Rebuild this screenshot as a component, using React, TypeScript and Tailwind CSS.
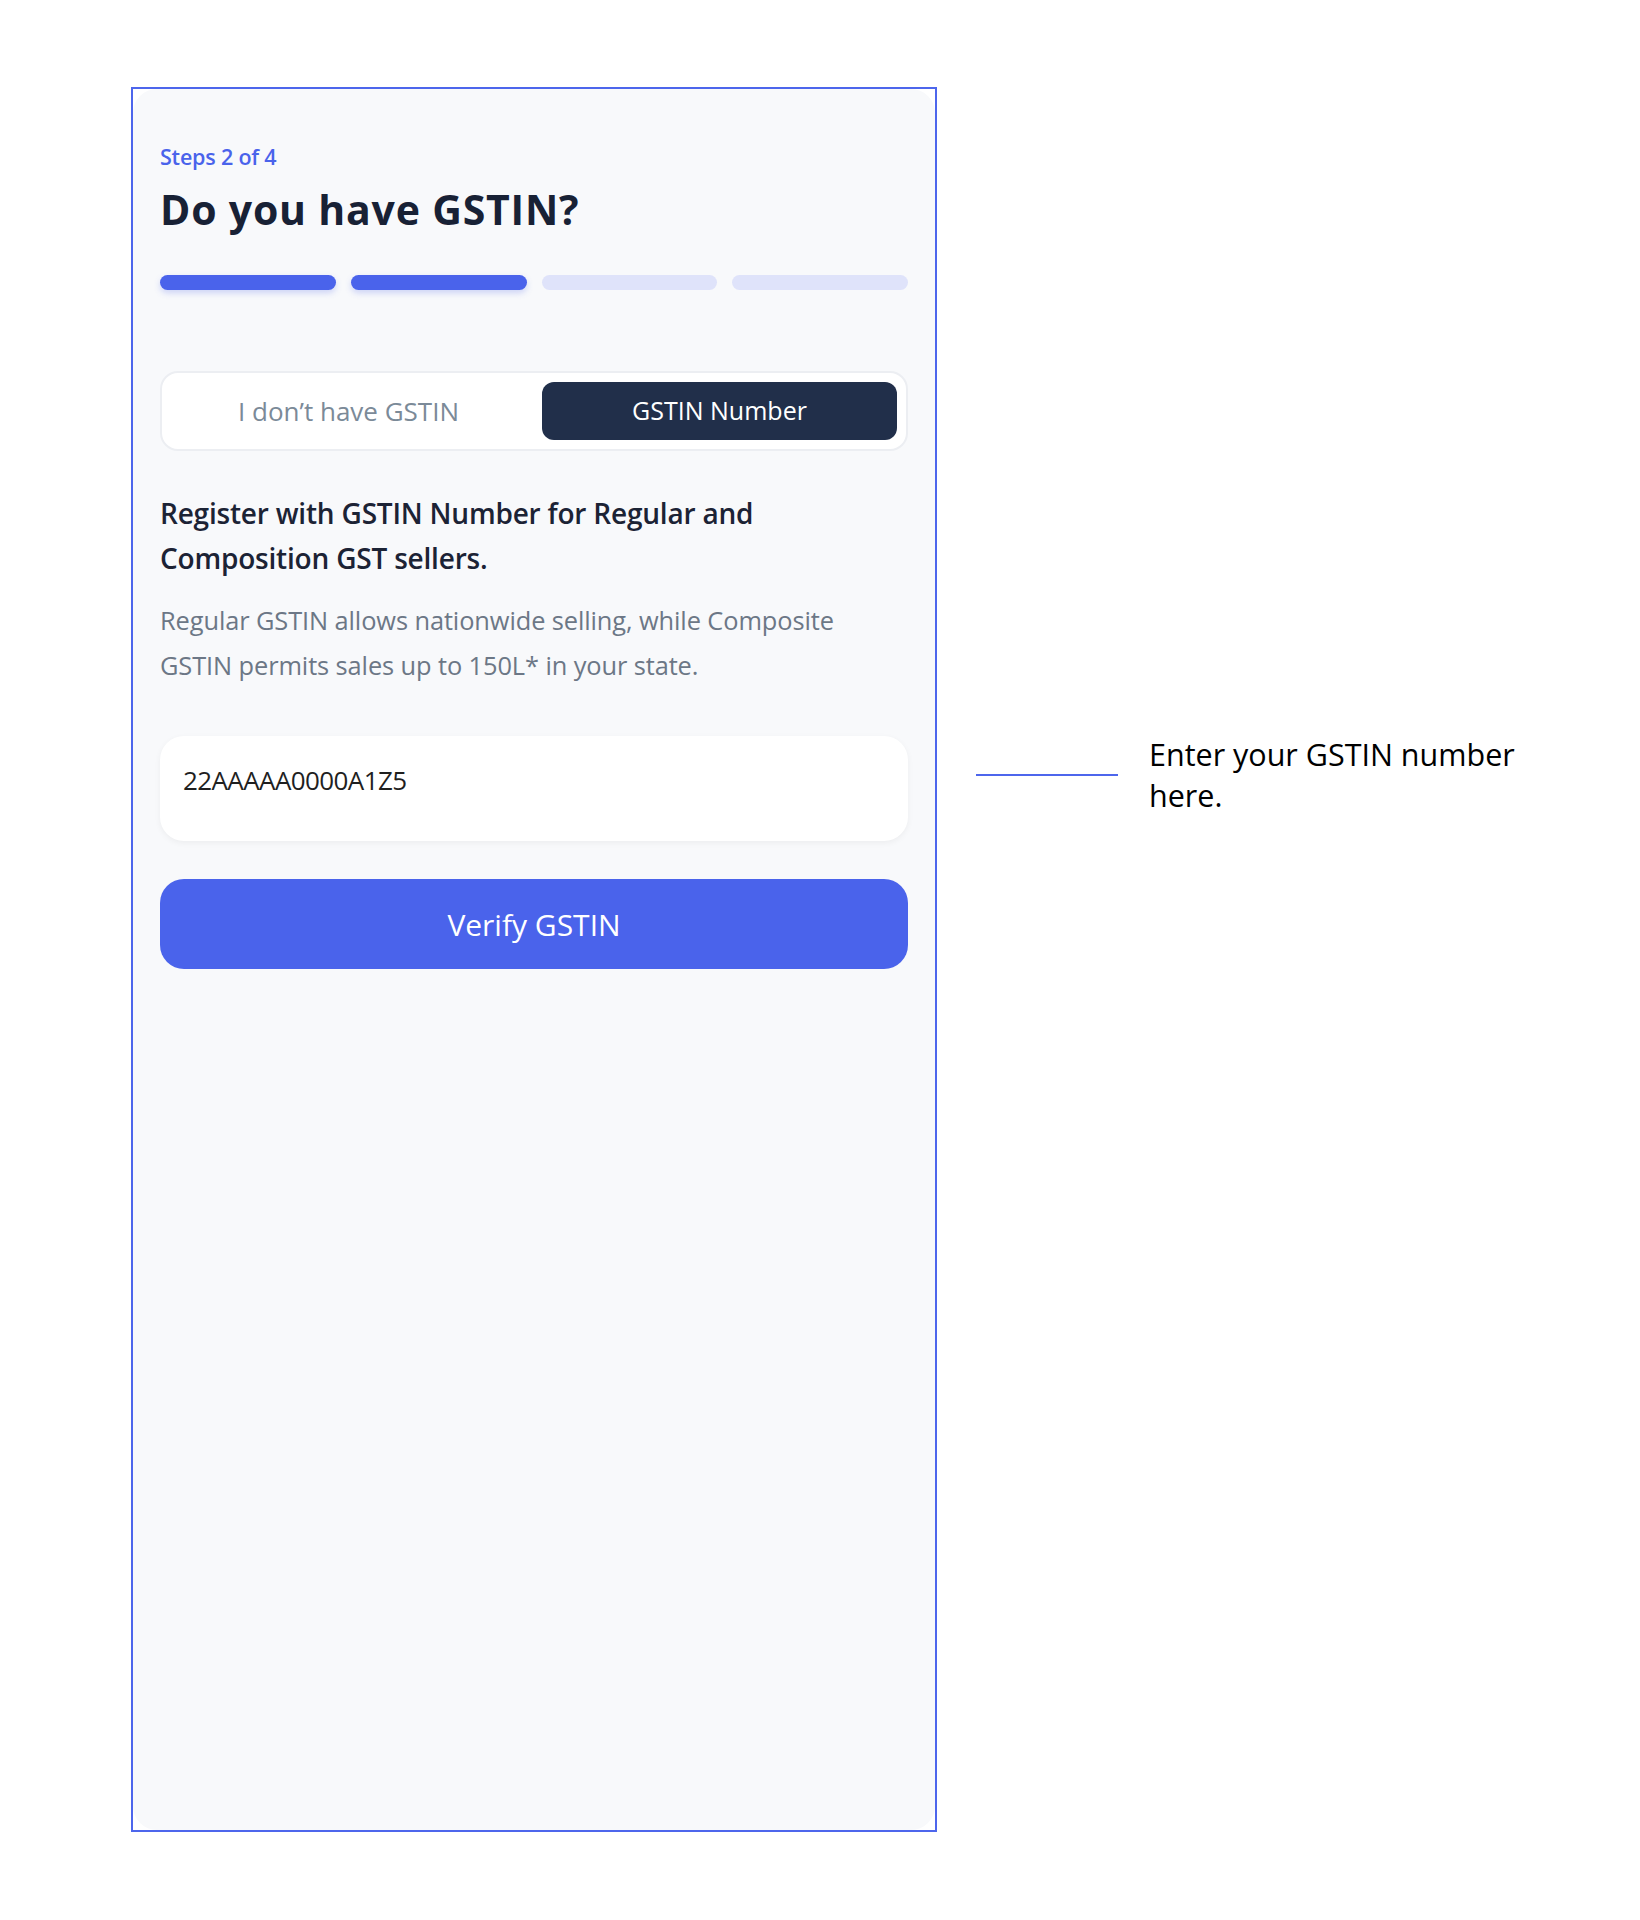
import React from "react";

export default function App() {
  return (
    <div className="min-h-[1920px] w-[1640px] bg-white" style={{ fontFamily: "'Open Sans', 'Noto Sans', sans-serif" }}>
      <div className="flex items-start pt-[87px] pl-[131px]">
        <div className="h-[1745px] w-[806px] border-2 border-[#4d66ec] bg-white">
          <div className="flex h-full flex-col rounded-[24px] bg-[#f8f9fb] px-[27px] pt-[56px]">
            <div className="text-[21.5px] leading-[24px] font-semibold tracking-[-0.2px] text-[#4a63eb]">Steps 2 of 4</div>
            <h1 className="mt-[16px] text-[41px] leading-[48px] font-bold tracking-[0.8px] text-[#182135]">Do you have GSTIN?</h1>
            <div className="mt-[42px] grid grid-cols-4 gap-[15px]">
              <div className="h-[15px] rounded-full bg-[#4a63eb] shadow-[0_3px_6px_rgba(74,99,235,0.25)]" />
              <div className="h-[15px] rounded-full bg-[#4a63eb] shadow-[0_3px_6px_rgba(74,99,235,0.25)]" />
              <div className="h-[15px] rounded-full bg-[#dfe3fa]" />
              <div className="h-[15px] rounded-full bg-[#dfe3fa]" />
            </div>
            <div className="mt-[81px] grid h-[80px] grid-cols-2 gap-[16px] rounded-[18px] border-2 border-[#eceef2] bg-white p-[9px]">
              <div className="flex items-center justify-center text-[26px] text-[#7b8a98]">I don’t have GSTIN</div>
              <div className="flex items-center justify-center rounded-[12px] bg-[#212f4a] text-[25px] font-medium text-white">GSTIN Number</div>
            </div>
            <div className="mt-[40px] text-[28px] leading-[45px] font-semibold tracking-[-0.2px] text-[#1c2335]">
              Register with GSTIN Number for Regular and
              <br />
              Composition GST sellers.
            </div>
            <div className="mt-[17px] text-[25.4px] leading-[45px] tracking-[-0.1px] text-[#6c7786]">
              Regular GSTIN allows nationwide selling, while Composite
              <br />
              GSTIN permits sales up to 150L* in your state.
            </div>
            <div className="mt-[48px] h-[105px] rounded-[24px] bg-white px-[23px] pt-[27px] shadow-[0_2px_6px_rgba(0,0,0,0.05)]">
              <span className="text-[26px] leading-[34px] tracking-[-0.6px] text-[#1f1f1f]">22AAAAA0000A1Z5</span>
            </div>
            <button className="mt-[38px] flex h-[90px] items-center justify-center rounded-[24px] bg-[#4a63eb] text-[30px] font-medium text-white">
              Verify GSTIN
            </button>
          </div>
        </div>
        <div className="ml-[39px] mt-[647px] flex items-center">
          <div className="h-[2px] w-[142px] bg-[#4d66ec]" />
          <div className="ml-[31px] w-[390px] text-[30.5px] leading-[41px] text-black">Enter your GSTIN number here.</div>
        </div>
      </div>
    </div>
  );
}
